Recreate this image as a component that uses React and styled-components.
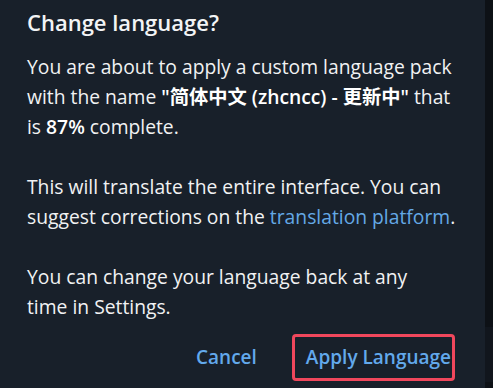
import React from "react";
import styled, { createGlobalStyle } from "styled-components";

const Global = createGlobalStyle`
  html, body { margin: 0; padding: 0; background: #0e1217; }
  body { font-family: "Open Sans", "Noto Sans CJK SC", sans-serif; -webkit-font-smoothing: antialiased; }
`;

const Page = styled.div`
  display: flex;
  width: 493px;
  height: 388px;
  overflow: hidden;
`;

const Dialog = styled.div`
  width: 485px;
  flex: none;
  background: #18202a;
  box-sizing: border-box;
  padding: 6.5px 0 0 27px;
  display: flex;
  flex-direction: column;
`;

const Side = styled.div`
  flex: 1;
  display: flex;
  flex-direction: column;
  background: #0d1116;
`;

const SideBand = styled.div`
  margin-top: 327px;
  height: 55px;
  background: #11161d;
`;

const Title = styled.h1`
  margin: 0;
  font-size: 22px;
  line-height: 30px;
  font-weight: 600;
  color: #f3f4f5;
`;

const Body = styled.p`
  margin: 15px 0 0;
  font-size: 19.3px;
  line-height: 30px;
  color: #f1f2f3;
  white-space: pre-line;
`;

const Strong = styled.b`
  font-weight: 600;
  color: #ffffff;
`;

const Link = styled.span`
  color: #64a9e6;
`;

const Actions = styled.div`
  display: flex;
  justify-content: flex-end;
  align-items: center;
  gap: 49px;
  margin-top: 20px;
  padding-right: 34px;
`;

const Button = styled.button`
  position: relative;
  background: none;
  border: none;
  padding: 0;
  font-family: inherit;
  font-size: 19px;
  line-height: 30px;
  font-weight: 600;
  color: #62a9ec;
  cursor: pointer;
`;

const Highlight = styled.span`
  position: absolute;
  left: -14px;
  right: -4px;
  top: -8px;
  bottom: -9px;
  border: 3px solid #f0475c;
  border-radius: 4px;
  pointer-events: none;
`;

export default function App() {
  return (
    <>
      <Global />
      <Page>
        <Dialog>
          <Title>Change language?</Title>
          <Body>
            You are about to apply a custom language pack{"\n"}with the name{" "}
            <Strong>"简体中文 (zhcncc) - 更新中"</Strong> that{"\n"}is{" "}
            <Strong>87%</Strong> complete.{"\n\n"}This will translate the entire
            interface. You can{"\n"}suggest corrections on the{" "}
            <Link>translation platform</Link>.{"\n\n"}You can change your language
            back at any{"\n"}time in Settings.
          </Body>
          <Actions>
            <Button>Cancel</Button>
            <Button>
              Apply Language
              <Highlight />
            </Button>
          </Actions>
        </Dialog>
        <Side>
          <SideBand />
        </Side>
      </Page>
    </>
  );
}
